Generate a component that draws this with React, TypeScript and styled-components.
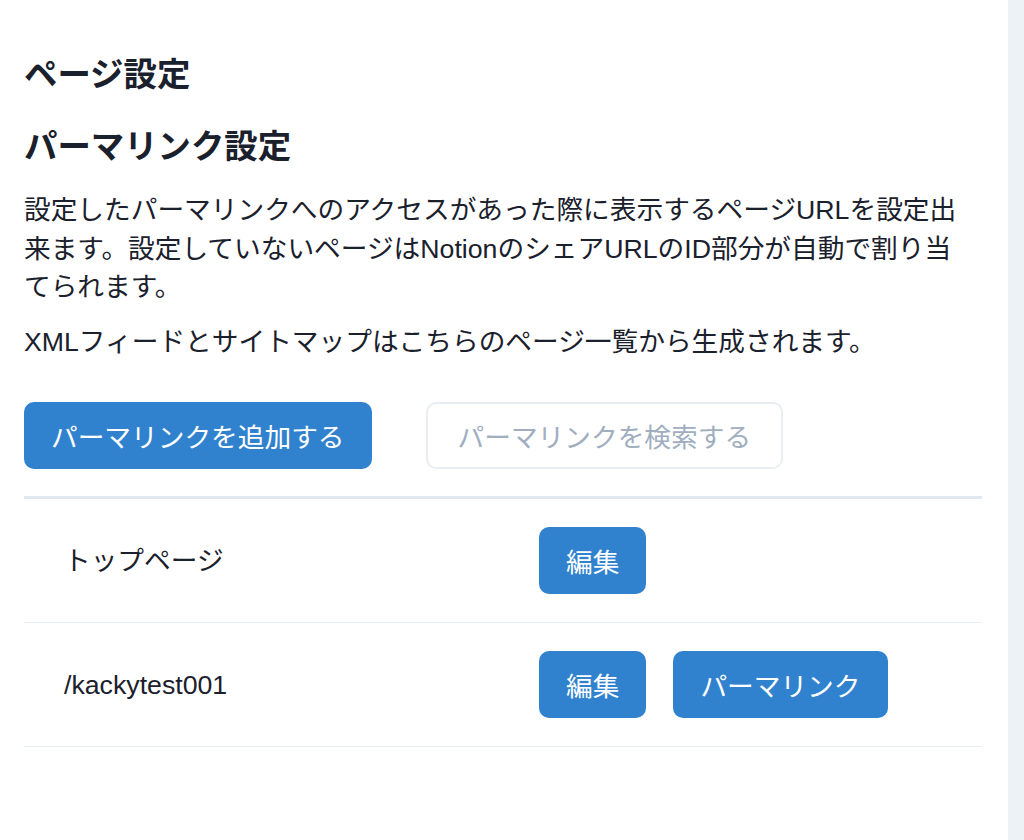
import { createGlobalStyle } from 'styled-components';
import styled from 'styled-components';

const GlobalStyle = createGlobalStyle`
  html, body {
    margin: 0;
    padding: 0;
    background: #ffffff;
  }
  body {
    font-family: "Liberation Sans", "Noto Sans CJK JP", sans-serif;
    color: #1a202c;
  }
`;

const Layout = styled.div`
  display: flex;
  min-height: 840px;
`;

const Main = styled.main`
  flex: 1;
  padding: 55px 26px 40px 24px;
  background: #ffffff;
`;

const SideStrip = styled.div`
  width: 16px;
  background: #edf2f7;
`;

const Heading = styled.h2<{ $gap: number }>`
  margin: 0 0 ${(p) => p.$gap}px;
  font-size: 33.4px;
  line-height: 40px;
  font-weight: 700;
  color: #1a202c;
`;

const Description = styled.p<{ $gap: number }>`
  margin: 0 0 ${(p) => p.$gap}px;
  padding-right: 10px;
  font-size: 26.7px;
  line-height: 38.5px;
`;

const ActionBar = styled.div`
  display: flex;
  align-items: center;
  gap: 54px;
  margin-bottom: 27px;
`;

const Button = styled.button<{ $variant?: 'solid' | 'outline' }>`
  height: 67px;
  padding: 0 ${(p) => (p.$variant === 'outline' ? 30 : 27)}px;
  border-radius: 10px;
  font-family: inherit;
  font-size: 26.7px;
  font-weight: 400;
  cursor: pointer;
  white-space: nowrap;
  border: ${(p) => (p.$variant === 'outline' ? '2px solid #e9eef4' : 'none')};
  background: ${(p) => (p.$variant === 'outline' ? '#ffffff' : '#3182ce')};
  color: ${(p) => (p.$variant === 'outline' ? '#a0aec0' : '#ffffff')};
`;

const Table = styled.table`
  width: 100%;
  border-collapse: collapse;
  table-layout: fixed;
  border-top: 3px solid #e2e8f0;
`;

const Row = styled.tr`
  border-bottom: 1px solid #e9eef4;
`;

const Cell = styled.td`
  padding: 28px 40px;
  font-size: 26.7px;
  line-height: 38px;
  vertical-align: middle;
`;

const ButtonGroup = styled.div`
  display: flex;
  gap: 27px;
`;

type Permalink = {
  label: string;
  custom: boolean;
};

const permalinks: Permalink[] = [
  { label: 'トップページ', custom: false },
  { label: '/kackytest001', custom: true },
];

export default function App() {
  return (
    <>
      <GlobalStyle />
      <Layout>
        <Main>
          <Heading $gap={32}>ページ設定</Heading>
          <Heading $gap={24}>パーマリンク設定</Heading>
          <Description $gap={16}>
            設定したパーマリンクへのアクセスがあった際に表示するページURLを設定出来ます。設定していないページはNotionのシェアURLのID部分が自動で割り当てられます。
          </Description>
          <Description $gap={41}>
            XMLフィードとサイトマップはこちらのページ一覧から生成されます。
          </Description>

          <ActionBar>
            <Button>パーマリンクを追加する</Button>
            <Button $variant="outline">パーマリンクを検索する</Button>
          </ActionBar>

          <Table>
            <colgroup>
              <col style={{ width: 475 }} />
              <col />
            </colgroup>
            <tbody>
              {permalinks.map((item) => (
                <Row key={item.label}>
                  <Cell>{item.label}</Cell>
                  <Cell>
                    <ButtonGroup>
                      <Button>編集</Button>
                      {item.custom && <Button>パーマリンク</Button>}
                    </ButtonGroup>
                  </Cell>
                </Row>
              ))}
            </tbody>
          </Table>
        </Main>
        <SideStrip />
      </Layout>
    </>
  );
}
